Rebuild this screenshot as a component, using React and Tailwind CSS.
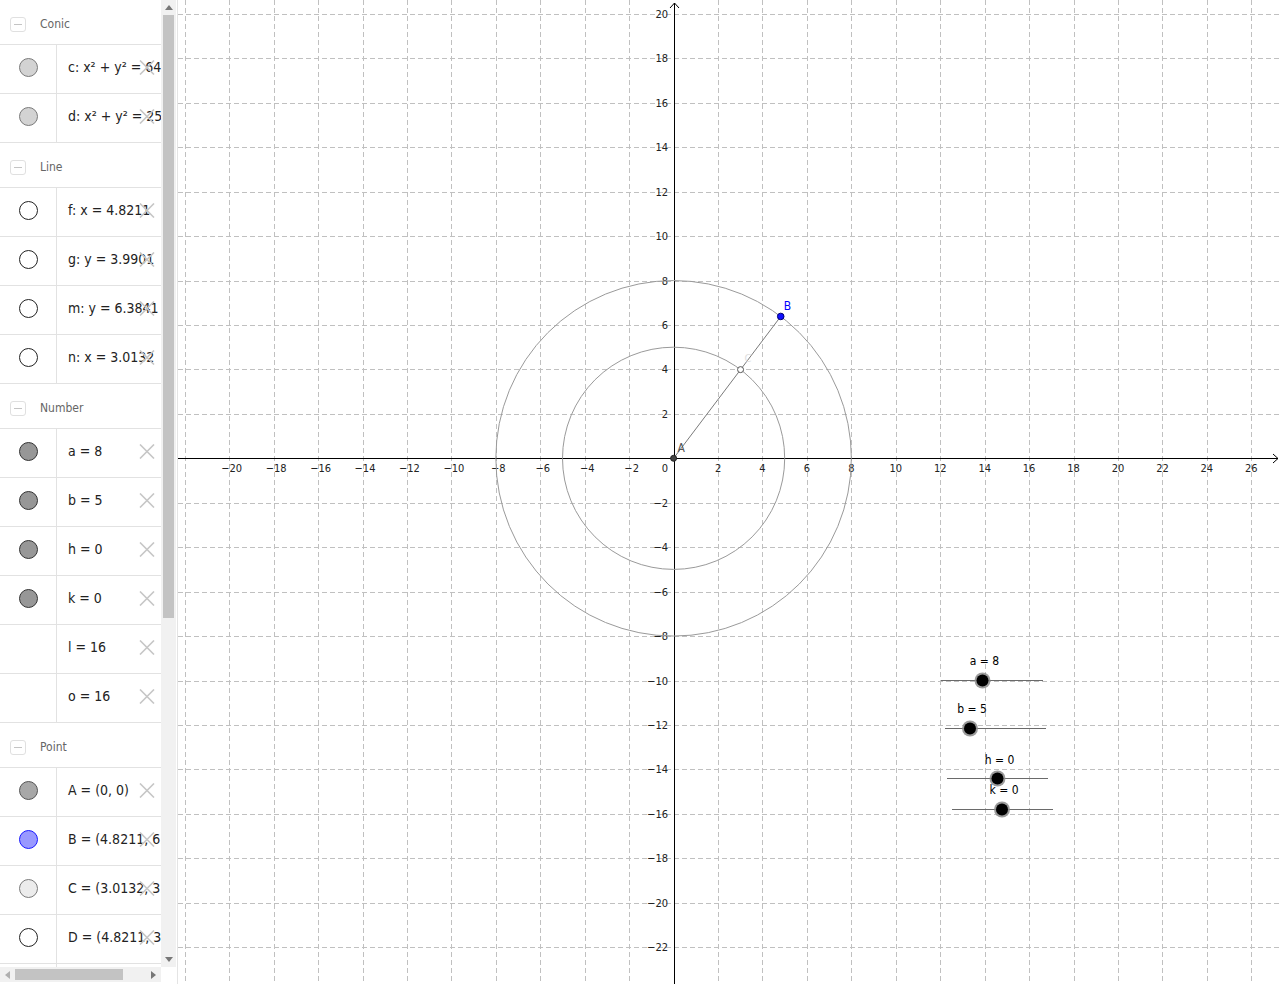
import React from "react";

const S = 22.22;
const OX = 673.6;
const OY = 458.3;
const px = (x) => OX + x * S;
const py = (y) => OY - y * S;

const DOTS = {
  conic: "bg-[#d3d3d3] border-[#7a7a7a]",
  line: "bg-white border-[#222]",
  num: "bg-[#979797] border-[#333]",
  ptA: "bg-[#a8a8a8] border-[#555]",
  ptB: "bg-[#9999ff] border-[#1a1aff]",
  ptC: "bg-[#ececec] border-[#7a7a7a]",
  ptD: "bg-white border-[#222]",
};

const SECTIONS = [
  {
    title: "Conic",
    rows: [
      { dot: "conic", text: "c: x² + y² = 64" },
      { dot: "conic", text: "d: x² + y² = 25" },
    ],
  },
  {
    title: "Line",
    rows: [
      { dot: "line", text: "f: x = 4.8211" },
      { dot: "line", text: "g: y = 3.9901" },
      { dot: "line", text: "m: y = 6.3841" },
      { dot: "line", text: "n: x = 3.0132" },
    ],
  },
  {
    title: "Number",
    rows: [
      { dot: "num", text: "a = 8" },
      { dot: "num", text: "b = 5" },
      { dot: "num", text: "h = 0" },
      { dot: "num", text: "k = 0" },
      { dot: null, text: "l = 16" },
      { dot: null, text: "o = 16" },
    ],
  },
  {
    title: "Point",
    rows: [
      { dot: "ptA", text: "A = (0, 0)" },
      { dot: "ptB", text: "B = (4.8211, 6.3841)" },
      { dot: "ptC", text: "C = (3.0132, 3.9901)" },
      { dot: "ptD", text: "D = (4.8211, 3.9901)" },
      { dot: "ptD", text: "E = (3.0132, 6.3841)" },
    ],
  },
];

function CloseIcon() {
  return (
    <svg className="absolute left-[139px] top-1/2 -translate-y-[9px]" width="16" height="15" viewBox="0 0 16 15">
      <path d="M1 0.5 L15 14.5 M15 0.5 L1 14.5" stroke="#c6c6c6" strokeWidth="1.6" fill="none" />
    </svg>
  );
}

function Header({ title }) {
  return (
    <div className="h-[45px] flex items-center border-b border-[#e2e2e2] pt-[4px]">
      <div className="ml-[10px] w-[16px] h-[15px] rounded-[3px] border border-[#e0e0e0] flex items-center justify-center">
        <div className="w-[8px] h-px bg-[#c4c4c4]" />
      </div>
      <span className="ml-[14px] text-[12px] text-[#666]">{title}</span>
    </div>
  );
}

function Row({ dot, text }) {
  return (
    <div className="relative h-[49px] flex border-b border-[#e2e2e2]">
      <div className="w-[57px] shrink-0 border-r border-[#e2e2e2] flex items-center justify-center pb-[4px]">
        {dot && <div className={`w-[19px] h-[19px] rounded-full border ${DOTS[dot]}`} />}
      </div>
      <div className="flex items-center pl-[11px] pb-[4px] whitespace-nowrap text-[14px] text-[#222]">{text}</div>
      <CloseIcon />
    </div>
  );
}

function Tri({ dir }) {
  const d = {
    up: "M0 5 L4 0 L8 5 Z",
    down: "M0 0 L8 0 L4 5 Z",
    left: "M5 0 L5 8 L0 4 Z",
    right: "M0 0 L0 8 L5 4 Z",
  }[dir];
  const w = dir === "up" || dir === "down" ? 8 : 5;
  const h = dir === "up" || dir === "down" ? 5 : 8;
  return (
    <svg width={w} height={h} viewBox={`0 0 ${w} ${h}`}>
      <path d={d} fill={dir === "left" ? "#b0b0b0" : "#777"} />
    </svg>
  );
}

function Slider({ y, x1, x2, kx, label, ly }) {
  const lx = kx + 2;
  return (
    <g>
      <line x1={x1} y1={y} x2={x2} y2={y} stroke="#6a6a6a" strokeWidth="1" />
      <circle cx={kx} cy={y} r="8" fill="#8a8a8a" opacity="0.85" />
      <circle cx={kx} cy={y} r="6" fill="#000" />
      <text x={lx} y={ly} textAnchor="middle" fontSize="12" fill="#000">
        {label}
      </text>
    </g>
  );
}

function Graph() {
  const vx = [];
  for (let k = -22; k <= 26; k += 2) if (k !== 0) vx.push(k);
  const hy = [];
  for (let k = -22; k <= 20; k += 2) if (k !== 0) hy.push(k);
  const xl = vx.filter((k) => k >= -20);
  const fmt = (k) => (k < 0 ? `−${-k}` : `${k}`);
  const A = [px(0), py(0)];
  const B = [px(4.8211), py(6.3841)];
  const C = [px(3.0132), py(3.9901)];
  return (
    <svg width="1102" height="984" viewBox="178 0 1102 984" className="shrink-0 block">
      <g stroke="#c0c0c0" strokeWidth="1" strokeDasharray="5 3">
        {vx.map((k) => (
          <line key={`v${k}`} x1={Math.round(px(k)) + 0.5} y1="0" x2={Math.round(px(k)) + 0.5} y2="984" />
        ))}
        {hy.map((k) => (
          <line key={`h${k}`} x1="178" y1={Math.round(py(k)) + 0.5} x2="1280" y2={Math.round(py(k)) + 0.5} />
        ))}
      </g>
      <g stroke="#000" strokeWidth="1" fill="none">
        <line x1="178" y1="458.5" x2="1278" y2="458.5" />
        <path d="M1273 454 L1278 458.5 L1273 463" />
        <line x1="674.5" y1="3" x2="674.5" y2="984" />
        <path d="M670 8 L674.5 3 L679 8" />
      </g>
      <g fontSize="11" fill="#222">
        {xl.map((k) => (
          <text key={`xl${k}`} x={px(k) + (k < 0 ? 2.5 : 0)} y="472" textAnchor="middle">
            {fmt(k)}
          </text>
        ))}
        <text x="668" y="472" textAnchor="end">0</text>
        {hy.map((k) => (
          <text key={`yl${k}`} x="668" y={py(k) + 4} textAnchor="end">
            {fmt(k)}
          </text>
        ))}
      </g>
      <g fill="none" stroke="#9a9a9a" strokeWidth="1">
        <circle cx={A[0]} cy={A[1]} r={8 * S} />
        <circle cx={A[0]} cy={A[1]} r={5 * S} />
      </g>
      <line x1={A[0]} y1={A[1]} x2={B[0]} y2={B[1]} stroke="#7a7a7a" strokeWidth="1" />
      <circle cx={A[0]} cy={A[1]} r="3" fill="#444" stroke="#222" strokeWidth="1" />
      <text x={A[0] + 4} y={A[1] - 6} fontSize="12" fill="#555">A</text>
      <circle cx={C[0]} cy={C[1]} r="3" fill="#fff" stroke="#555" strokeWidth="1" />
      <text x={C[0] + 4} y={C[1] - 8} fontSize="11" fill="#e0e0e0">C</text>
      <circle cx={B[0]} cy={B[1]} r="3.3" fill="#1010ff" stroke="#000070" strokeWidth="1" />
      <text x={B[0] + 3} y={B[1] - 6} fontSize="12" fill="#0000ff">B</text>
      <Slider y={680.5} x1={941} x2={1043} kx={982.5} label="a = 8" ly={665} />
      <Slider y={728.5} x1={945} x2={1046} kx={970} label="b = 5" ly={713} />
      <Slider y={778.5} x1={947} x2={1048} kx={997.5} label="h = 0" ly={764} />
      <Slider y={809.5} x1={952} x2={1053} kx={1002} label="k = 0" ly={794} />
    </svg>
  );
}

export default function App() {
  return (
    <div className="flex w-[1280px] h-[984px] overflow-hidden bg-white font-['DejaVu_Sans_Condensed','DejaVu_Sans',sans-serif] font-stretch-condensed">
      <aside className="w-[177px] shrink-0 flex flex-col">
        <div className="flex flex-1 min-h-0">
          <div className="w-[161px] overflow-hidden">
            {SECTIONS.map((s) => (
              <div key={s.title}>
                <Header title={s.title} />
                {s.rows.map((r) => (
                  <Row key={r.text} {...r} />
                ))}
              </div>
            ))}
          </div>
          <div className="w-[15px] bg-[#f1f1f1] flex flex-col items-center">
            <div className="h-[15px] flex items-center justify-center">
              <Tri dir="up" />
            </div>
            <div className="w-[11px] h-[603px] bg-[#c3c3c3]" />
            <div className="flex-1" />
            <div className="h-[15px] flex items-center justify-center">
              <Tri dir="down" />
            </div>
          </div>
        </div>
        <div className="h-[15px] flex">
          <div className="w-[161px] bg-[#f1f1f1] flex items-center">
            <div className="w-[15px] flex justify-center">
              <Tri dir="left" />
            </div>
            <div className="w-[108px] h-[11px] bg-[#c3c3c3]" />
            <div className="flex-1" />
            <div className="w-[15px] flex justify-center">
              <Tri dir="right" />
            </div>
          </div>
        </div>
        <div className="h-[2px]" />
      </aside>
      <div className="w-px shrink-0 bg-[#e4e4e4]" />
      <Graph />
    </div>
  );
}
